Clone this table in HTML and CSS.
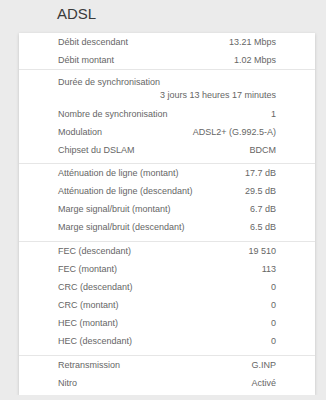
FILE: index.html
```html
<!DOCTYPE html>
<html lang="fr">
<head>
<meta charset="UTF-8">
<meta name="viewport" content="width=device-width, initial-scale=1.0">
<title>ADSL</title>
<link rel="stylesheet" href="styles.css">
</head>
<body>

<h2 class="title">ADSL</h2>

<div class="card">
  <div class="group first">
    <div class="row"><span>Débit descendant</span><span>13.21 Mbps</span></div>
    <div class="row"><span>Débit montant</span><span>1.02 Mbps</span></div>
  </div>

  <div class="group sync">
    <div class="row double">
      <span>Durée de synchronisation</span>
      <span class="value">3 jours 13 heures 17 minutes</span>
    </div>
    <div class="row"><span>Nombre de synchronisation</span><span>1</span></div>
    <div class="row"><span>Modulation</span><span>ADSL2+ (G.992.5-A)</span></div>
    <div class="row"><span>Chipset du DSLAM</span><span>BDCM</span></div>
  </div>

  <div class="group">
    <div class="row"><span>Atténuation de ligne (montant)</span><span>17.7 dB</span></div>
    <div class="row"><span>Atténuation de ligne (descendant)</span><span>29.5 dB</span></div>
    <div class="row"><span>Marge signal/bruit (montant)</span><span>6.7 dB</span></div>
    <div class="row"><span>Marge signal/bruit (descendant)</span><span>6.5 dB</span></div>
  </div>

  <div class="group">
    <div class="row"><span>FEC (descendant)</span><span>19 510</span></div>
    <div class="row"><span>FEC (montant)</span><span>113</span></div>
    <div class="row"><span>CRC (descendant)</span><span>0</span></div>
    <div class="row"><span>CRC (montant)</span><span>0</span></div>
    <div class="row"><span>HEC (montant)</span><span>0</span></div>
    <div class="row"><span>HEC (descendant)</span><span>0</span></div>
  </div>

  <div class="group last">
    <div class="row"><span>Retransmission</span><span>G.INP</span></div>
    <div class="row"><span>Nitro</span><span>Activé</span></div>
  </div>
</div>

</body>
</html>
```

FILE: styles.css
```css
body {
  margin: 0;
  background: #ebebeb;
  font-family: "Liberation Sans", Arial, sans-serif;
  color: #666;
}
.title {
  margin: 0;
  height: 33px;
  box-sizing: border-box;
  padding: 6px 0 0 57px;
  font-size: 15px;
  line-height: 15px;
  font-weight: normal;
  color: #3a3a3a;
}
.card {
  margin-left: 19px;
  width: 296px;
  background: #fff;
  box-shadow: 0 1px 3px rgba(0, 0, 0, 0.18);
}
.group {
  padding-bottom: 5px;
  border-bottom: 1px solid #e6e6e6;
}
.group.first {
  padding-bottom: 0;
}
.group.sync {
  padding-top: 4px;
  padding-bottom: 4px;
}
.group.last {
  padding-bottom: 3px;
  border-bottom: none;
}
.row {
  display: flex;
  justify-content: space-between;
  padding: 0 39px;
  height: 18px;
  font-size: 9px;
  line-height: 18px;
}
.row.double {
  flex-direction: column;
  height: auto;
  padding-top: 2px;
  padding-bottom: 3px;
  line-height: 13px;
}
.row.double .value {
  text-align: right;
}
```
